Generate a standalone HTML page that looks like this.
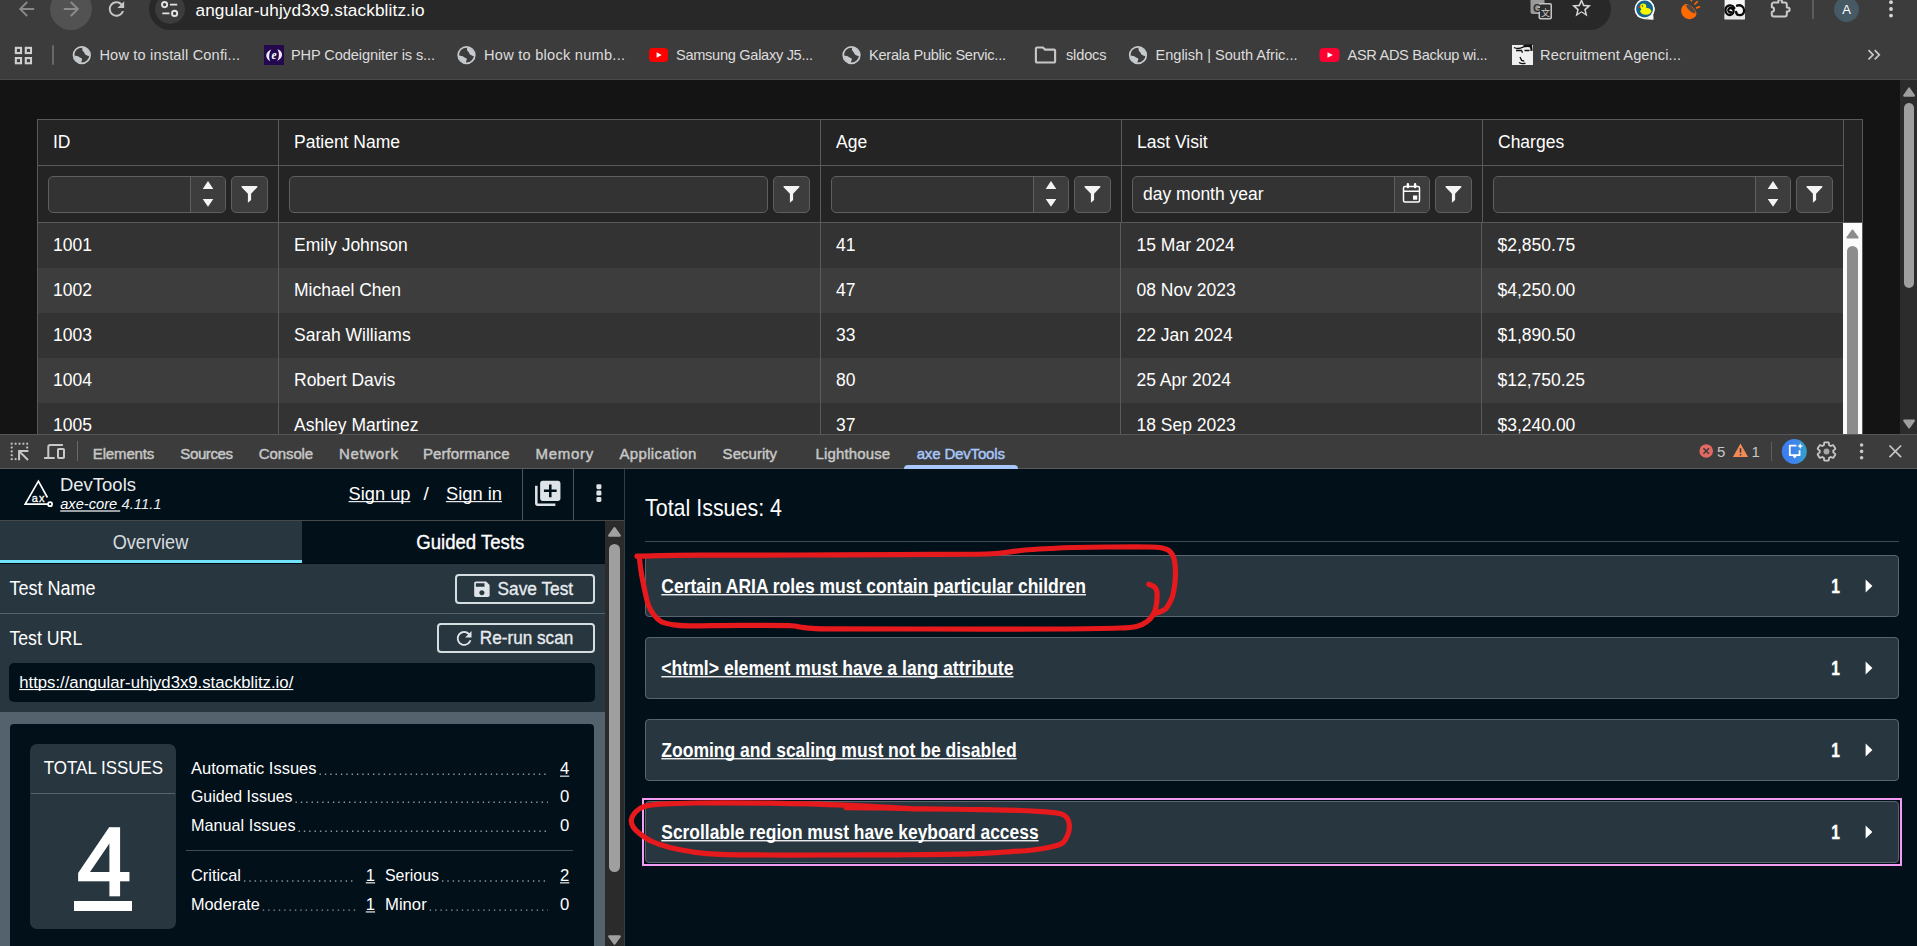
<!DOCTYPE html>
<html lang="en">
<head>
<meta charset="utf-8">
<title>axe DevTools - angular-uhjyd3x9.stackblitz.io</title>
<style>
html,body{margin:0;padding:0;background:#141414;overflow:hidden;}
#root{position:relative;width:1917px;height:946px;overflow:hidden;background:#141414;font-family:"Liberation Sans",sans-serif;}
.b{position:absolute;box-sizing:border-box;}
svg#ov{position:absolute;left:0;top:0;width:1917px;height:946px;font-family:"Liberation Sans",sans-serif;}
svg#ov text{white-space:pre;}
</style>
</head>
<body>
<div id="root">
<div class="b " style="left:0px;top:0px;width:1917px;height:80px;background:#3c3c3c;"></div>
<div class="b " style="left:0px;top:79px;width:1917px;height:1px;background:#4a4a4a;"></div>
<div class="b " style="left:149px;top:-12px;width:1462px;height:42px;background:#282828;border-radius:21px;"></div>
<div class="b " style="left:50px;top:-12px;width:42px;height:42px;background:#525252;border-radius:21px;"></div>
<div class="b " style="left:155px;top:-6px;width:30px;height:30px;background:#3c3c3c;border-radius:15px;"></div>
<div class="b " style="left:1812px;top:0px;width:2px;height:18.5px;background:#5c5c5c;"></div>
<div class="b " style="left:1834px;top:-3.5px;width:25px;height:25px;background:#455a64;border-radius:50%;"></div>
<div class="b " style="left:51.6px;top:45px;width:2px;height:20px;background:#686868;border-radius:1px;"></div>
<div class="b " style="left:264px;top:45px;width:20px;height:20px;background:#24084e;"></div>
<div class="b " style="left:1512px;top:45px;width:20.5px;height:20px;background:#efefef;"></div>
<div class="b " style="left:0px;top:80px;width:1900px;height:354px;background:#141414;"></div>
<div class="b " style="left:1900px;top:80px;width:17px;height:354px;background:#2c2c2c;"></div>
<div class="b " style="left:1904px;top:103px;width:10px;height:185px;background:#9f9f9f;border-radius:5px;"></div>
<div class="b " style="left:37px;top:119px;width:1826px;height:320px;background:#242424;border:1px solid #5a5a5a;"></div>
<div class="b " style="left:38px;top:223px;width:1805px;height:45px;background:#333333;"></div>
<div class="b " style="left:38px;top:268px;width:1805px;height:45px;background:#3d3d3d;"></div>
<div class="b " style="left:38px;top:313px;width:1805px;height:45px;background:#333333;"></div>
<div class="b " style="left:38px;top:358px;width:1805px;height:45px;background:#3d3d3d;"></div>
<div class="b " style="left:38px;top:403px;width:1805px;height:31px;background:#333333;"></div>
<div class="b " style="left:38px;top:165px;width:1806px;height:1px;background:#5a5a5a;"></div>
<div class="b " style="left:38px;top:222px;width:1824px;height:1px;background:#5a5a5a;"></div>
<div class="b " style="left:278px;top:120px;width:1px;height:102px;background:#5a5a5a;"></div>
<div class="b " style="left:820px;top:120px;width:1px;height:102px;background:#5a5a5a;"></div>
<div class="b " style="left:1121px;top:120px;width:1px;height:102px;background:#5a5a5a;"></div>
<div class="b " style="left:1482px;top:120px;width:1px;height:102px;background:#5a5a5a;"></div>
<div class="b " style="left:1843px;top:120px;width:1px;height:102px;background:#5a5a5a;"></div>
<div class="b " style="left:278px;top:223px;width:1px;height:211px;background:#5a5a5a;"></div>
<div class="b " style="left:820px;top:223px;width:1px;height:211px;background:#5a5a5a;"></div>
<div class="b " style="left:1120px;top:223px;width:1px;height:211px;background:#5a5a5a;"></div>
<div class="b " style="left:1481px;top:223px;width:1px;height:211px;background:#5a5a5a;"></div>
<div class="b " style="left:1843px;top:223px;width:19px;height:211px;background:#fbfbfb;"></div>
<div class="b " style="left:1847px;top:246px;width:11px;height:200px;background:#8c8c8c;border-radius:5.5px;"></div>
<div class="b " style="left:48px;top:176px;width:178px;height:37px;background:#333333;border:1px solid #5f5f5f;border-radius:5px;"></div>
<div class="b " style="left:190px;top:177px;width:35px;height:35px;background:#3d3d3d;border-left:1px solid #5f5f5f;border-radius:0 4px 4px 0;"></div>
<div class="b " style="left:231px;top:176px;width:37px;height:37px;background:#3d3d3d;border:1px solid #5f5f5f;border-radius:5px;"></div>
<div class="b " style="left:289px;top:176px;width:479px;height:37px;background:#333333;border:1px solid #5f5f5f;border-radius:5px;"></div>
<div class="b " style="left:773px;top:176px;width:37px;height:37px;background:#3d3d3d;border:1px solid #5f5f5f;border-radius:5px;"></div>
<div class="b " style="left:831px;top:176px;width:238px;height:37px;background:#333333;border:1px solid #5f5f5f;border-radius:5px;"></div>
<div class="b " style="left:1033px;top:177px;width:35px;height:35px;background:#3d3d3d;border-left:1px solid #5f5f5f;border-radius:0 4px 4px 0;"></div>
<div class="b " style="left:1074px;top:176px;width:37px;height:37px;background:#3d3d3d;border:1px solid #5f5f5f;border-radius:5px;"></div>
<div class="b " style="left:1132px;top:176px;width:298px;height:37px;background:#333333;border:1px solid #5f5f5f;border-radius:5px;"></div>
<div class="b " style="left:1394px;top:177px;width:35px;height:35px;background:#3d3d3d;border-left:1px solid #5f5f5f;border-radius:0 4px 4px 0;"></div>
<div class="b " style="left:1435px;top:176px;width:37px;height:37px;background:#3d3d3d;border:1px solid #5f5f5f;border-radius:5px;"></div>
<div class="b " style="left:1493px;top:176px;width:298px;height:37px;background:#333333;border:1px solid #5f5f5f;border-radius:5px;"></div>
<div class="b " style="left:1755px;top:177px;width:35px;height:35px;background:#3d3d3d;border-left:1px solid #5f5f5f;border-radius:0 4px 4px 0;"></div>
<div class="b " style="left:1796px;top:176px;width:37px;height:37px;background:#3d3d3d;border:1px solid #5f5f5f;border-radius:5px;"></div>
<div class="b " style="left:0px;top:434px;width:1917px;height:35px;background:#3c3c3c;border-top:1px solid #565656;border-bottom:1px solid #5a5a5a;"></div>
<div class="b " style="left:77px;top:441px;width:1px;height:20px;background:#686868;"></div>
<div class="b " style="left:904px;top:464.5px;width:113.5px;height:4px;background:#a8c7fa;border-radius:4px 4px 0 0;"></div>
<div class="b " style="left:1770.5px;top:441.5px;width:1.5px;height:19.5px;background:#5e5e5e;"></div>
<div class="b " style="left:0px;top:469px;width:1917px;height:477px;background:#02101a;"></div>
<div class="b " style="left:0px;top:520px;width:625px;height:1px;background:#484848;"></div>
<div class="b " style="left:522px;top:469px;width:1px;height:51px;background:#4b5660;"></div>
<div class="b " style="left:573px;top:469px;width:1px;height:51px;background:#4b5660;"></div>
<div class="b " style="left:605px;top:521px;width:19px;height:425px;background:#2b2b2b;"></div>
<div class="b " style="left:624px;top:469px;width:1px;height:477px;background:#303d47;"></div>
<div class="b " style="left:609px;top:544px;width:11px;height:328px;background:#9f9f9f;border-radius:5.5px;"></div>
<div class="b " style="left:0px;top:521px;width:302px;height:43px;background:#283640;"></div>
<div class="b " style="left:0px;top:560px;width:302px;height:3px;background:#70e2fa;"></div>
<div class="b " style="left:0px;top:563px;width:605px;height:1px;background:#010b14;"></div>
<div class="b " style="left:0px;top:564px;width:605px;height:148px;background:#283640;"></div>
<div class="b " style="left:0px;top:613px;width:605px;height:1px;background:#53626d;"></div>
<div class="b " style="left:455px;top:574px;width:140px;height:30px;border:2px solid #d4dde0;border-radius:4px;"></div>
<div class="b " style="left:437px;top:623px;width:158px;height:30px;border:2px solid #d4dde0;border-radius:4px;"></div>
<div class="b " style="left:9px;top:663px;width:586px;height:39px;background:#02101a;border-radius:5px;"></div>
<div class="b " style="left:0px;top:712px;width:605px;height:234px;background:#53626d;"></div>
<div class="b " style="left:10px;top:724px;width:584px;height:230px;background:#02101a;border-radius:4px;"></div>
<div class="b " style="left:30px;top:744px;width:146px;height:185px;background:#283640;border-radius:7px;"></div>
<div class="b " style="left:31px;top:793px;width:144px;height:1px;background:#53626d;"></div>
<div class="b " style="left:74px;top:900.7px;width:58px;height:10px;background:#ffffff;"></div>
<div class="b " style="left:186px;top:850px;width:387px;height:1px;background:#3e4b55;"></div>
<div class="b " style="left:645px;top:541px;width:1254px;height:1px;background:#3e4b55;"></div>
<div class="b " style="left:645px;top:555px;width:1254px;height:62px;background:#283640;border:1px solid #586570;border-radius:4px;"></div>
<div class="b " style="left:645px;top:637px;width:1254px;height:62px;background:#283640;border:1px solid #586570;border-radius:4px;"></div>
<div class="b " style="left:645px;top:719px;width:1254px;height:62px;background:#283640;border:1px solid #586570;border-radius:4px;"></div>
<div class="b " style="left:645px;top:801px;width:1254px;height:62px;background:#283640;border:1px solid #586570;border-radius:4px;"></div>
<div class="b " style="left:642px;top:798px;width:1260px;height:68px;border:2px solid #f29df2;"></div>
<svg id="ov" width="1917" height="946" viewBox="0 0 1917 946">
<path transform="translate(15.0,-2.5) scale(0.9583)" d="M20 11H7.83l5.59-5.59L12 4l-8 8 8 8 1.41-1.41L7.83 13H20v-2z" fill="#888" />
<path transform="translate(60.0,-2.5) scale(0.9583)" d="M12 4l-1.41 1.41L16.17 11H4v2h12.17l-5.58 5.59L12 20l8-8z" fill="#8c8c8c" />
<path transform="translate(105.0,-2.5) scale(0.9583)" d="M17.65 6.35C16.2 4.9 14.21 4 12 4c-4.42 0-7.99 3.58-7.99 8s3.57 8 7.99 8c3.73 0 6.84-2.55 7.73-6h-2.08c-.82 2.33-3.04 4-5.65 4-3.31 0-6-2.69-6-6s2.69-6 6-6c1.66 0 3.14.69 4.22 1.78L13 11h7V4l-2.35 2.35z" fill="#c7c7c7" />
<g stroke="#e3e3e3" stroke-width="1.9" fill="none"><circle cx="164.6" cy="4.6" r="2.6"/><path d="M170 4.6h7.2M162.3 13.4h7.2"/><circle cx="174.6" cy="13.4" r="2.6"/></g>
<text x="195.5" y="15.8" font-size="17.2" fill="#ffffff" textLength="229" lengthAdjust="spacing">angular-uhjyd3x9.stackblitz.io</text>
<g><rect x="1530.5" y="-2" width="14" height="16" rx="2" fill="#9a9a9a"/><rect x="1538.5" y="3" width="13.5" height="16.5" rx="2" fill="#c4c4c4"/><rect x="1540" y="4.5" width="10.5" height="13.5" rx="1" fill="#2e2e2e"/></g>
<text x="1533" y="11.5" font-size="11" fill="#2e2e2e" font-weight="bold">G</text>
<text x="1541" y="15.5" font-size="9" fill="#d0d0d0" font-family="Liberation Sans, Noto Sans CJK SC, sans-serif">文</text>
<path transform="translate(1570.0,-3.5) scale(0.9583)" d="M22 9.24l-7.19-.62L12 2 9.19 8.63 2 9.24l5.46 4.73L5.82 21 12 16.77 18.18 21l-1.63-7.03L22 9.24zM12 15.4l-3.76 2.27 1-4.28-3.32-2.88 4.38-.38L12 6.1l1.71 4.04 4.38.38-3.32 2.88 1 4.28L12 15.4z" fill="#d6d6d6" />
<g><path d="M1644.6 -1a10.1 10.1 0 1 1 0 20.200l8.600 .6-2.400-3.400" fill="#fff"/><circle cx="1644.6" cy="9.1" r="10.1" fill="#fff"/><path d="M1650 16.500l3.600 3.400-.4-6z" fill="#fff"/><circle cx="1644.6" cy="9.1" r="8.500" fill="#15638f"/><circle cx="1643.2" cy="6.600" r="3.100" fill="#f7f700"/><ellipse cx="1645.8" cy="11.300" rx="5.500" ry="3.500" fill="#f7f700"/><circle cx="1639.3" cy="7.300" r="1" fill="#e8261c"/><circle cx="1642.4" cy="6.100" r=".75" fill="#333"/></g>
<g><path d="M1684.6 4.200a8.200 8.200 0 0 0 -1.800 11.600a8.200 8.200 0 0 0 11.400 1.800a12 12 0 0 0 2.200-2.600z" fill="#ff6a00"/><ellipse cx="1690.6" cy="9.600" rx="3" ry="7.500" transform="rotate(-48 1690.6 9.600)" fill="#ff6a00"/><ellipse cx="1691.1" cy="9" rx="2.100" ry="5.900" transform="rotate(-48 1690.9 9.300)" fill="#4a4a4a"/><path d="M1691.3 .6l1.300-2.800M1695 4l2.100-2.300M1696.7 7.900l2.700-1.100" stroke="#ff6a00" stroke-width="1.700" stroke-linecap="round" fill="none"/></g>
<g><rect x="1724.6" y="-2" width="20.2" height="21.3" fill="#f5f5f5"/><rect x="1724.6" y="14.600" width="20.2" height="4.700" fill="#e6e6e6"/><g fill="none" stroke="#0a0a0a" stroke-width="2.100" stroke-linecap="round" transform="translate(1734.7 9.700) scale(1.1 1.12) translate(-1734.7 -9.700)"><path d="M1731.3 11.900a1.900 1.900 0 1 1 -.2-3.700c1.700 .1 2.700 1.500 2.600 3.200-.2 1.900-1.900 3.100-3.700 3-2.200-.2-3.900-2.200-3.700-4.700 .2-2.400 2.200-4.100 4.600-3.900 1.600 .1 2.800 .9 3.500 2.300"/><path d="M1736.8 6.100c3.400-1.100 6.500 .9 6.500 4.200 0 2.500-1.800 4.300-4 4.300-2 0-3.300-1.300-3.300-3"/></g></g>
<path d="M1778.400 2.500H1773.800a2 2 0 0 0 -2 2V7.300c3 0 3 4.600 0 4.600V14.400a2 2 0 0 0 2 2H1784.800a2 2 0 0 0 2-2V11.500h.9a1.950 1.950 0 0 0 0-3.900h-.9V4.500a2 2 0 0 0 -2-2H1781.900v-1.200a1.750 1.750 0 0 0 -3.500 0Z" fill="none" stroke="#c9c9c9" stroke-width="2" stroke-linejoin="round"/>
<text x="1846.6" y="13.5" font-size="13" fill="#ffffff" text-anchor="middle">A</text>
<g fill="#d6d6d6"><circle cx="1891" cy="2.2" r="1.9"/><circle cx="1891" cy="9" r="1.9"/><circle cx="1891" cy="15.6" r="1.9"/></g>
<g fill="none" stroke="#cfcfcf" stroke-width="2.100"><rect x="15.850" y="47.850" width="5.200" height="5.200"/><rect x="25.800" y="47.850" width="5.200" height="5.200"/><rect x="15.850" y="58.050" width="5.200" height="5.200"/><rect x="25.800" y="58.050" width="5.200" height="5.200"/></g>
<g transform="translate(81.8,55.1)"><circle r="8.300" fill="none" stroke="#c7cacd" stroke-width="1.700"/><path d="M.8 -7.800A7.800 7.800 0 0 1 7.800 .3C6.200 1.500 4.800 .2 3.600 -.5 2.400 -1.200 3.100 -2.600 1.800 -3.400 .5 -4.200 .1 -6 .8 -7.800Z" fill="#c7cacd"/><path d="M-7.800 .2A7.800 7.800 0 0 0 -.3 7.800C-.9 6.100 .5 5.100 .3 3.800 .1 2.500 -1.600 2.800 -2.700 1.800 -3.800 .8 -5.800 1 -7.800 .2Z" fill="#c7cacd"/></g>
<text x="99.4" y="60" font-size="14.6" fill="#dddddd" textLength="140.6" lengthAdjust="spacing">How to install Confi...</text>
<path d="M271.300 49.400C265.600 51.300 264 57.800 270.400 61.300 268.600 58 268.800 53 271.300 49.400ZM277.300 49.200C283.200 50.800 284.200 57.800 277.100 60.900 279.400 57.500 279.600 52.500 277.300 49.200Z" fill="#efeaf8"/>
<text x="274.1" y="58.6" font-size="11.5" fill="#ffffff" font-weight="bold" font-style="italic" text-anchor="middle" font-family="Liberation Serif, serif">e</text>
<text x="291" y="60" font-size="14.6" fill="#dddddd" textLength="144" lengthAdjust="spacing">PHP Codeigniter is s...</text>
<g transform="translate(466.5,55.1)"><circle r="8.300" fill="none" stroke="#c7cacd" stroke-width="1.700"/><path d="M.8 -7.800A7.800 7.800 0 0 1 7.800 .3C6.200 1.500 4.800 .2 3.600 -.5 2.400 -1.200 3.100 -2.600 1.800 -3.400 .5 -4.200 .1 -6 .8 -7.800Z" fill="#c7cacd"/><path d="M-7.800 .2A7.800 7.800 0 0 0 -.3 7.800C-.9 6.100 .5 5.100 .3 3.800 .1 2.500 -1.600 2.800 -2.700 1.800 -3.800 .8 -5.800 1 -7.800 .2Z" fill="#c7cacd"/></g>
<text x="484" y="60" font-size="14.6" fill="#dddddd" textLength="141" lengthAdjust="spacing">How to block numb...</text>
<g><rect x="649" y="48" width="19" height="14" rx="4" fill="#ff0000"/><path d="M656.6 52.2l5.130000000000001 2.8000000000000003l-5.130000000000001 2.8000000000000003z" fill="#fff"/></g>
<text x="676" y="60" font-size="14.6" fill="#dddddd" textLength="137" lengthAdjust="spacing">Samsung Galaxy J5...</text>
<g transform="translate(851.5,55.1)"><circle r="8.300" fill="none" stroke="#c7cacd" stroke-width="1.700"/><path d="M.8 -7.800A7.800 7.800 0 0 1 7.800 .3C6.200 1.500 4.800 .2 3.600 -.5 2.400 -1.200 3.100 -2.600 1.800 -3.400 .5 -4.200 .1 -6 .8 -7.800Z" fill="#c7cacd"/><path d="M-7.800 .2A7.800 7.800 0 0 0 -.3 7.800C-.9 6.100 .5 5.100 .3 3.800 .1 2.500 -1.600 2.800 -2.700 1.800 -3.800 .8 -5.800 1 -7.800 .2Z" fill="#c7cacd"/></g>
<text x="869" y="60" font-size="14.6" fill="#dddddd" textLength="137" lengthAdjust="spacing">Kerala Public Servic...</text>
<path transform="translate(1032.7,42.2) scale(1.0667)" d="M9.17 6l2 2H20v10H4V6h5.17M10 4H4c-1.1 0-1.99.9-1.99 2L2 18c0 1.1.9 2 2 2h16c1.1 0 2-.9 2-2V8c0-1.1-.9-2-2-2h-8l-2-2z" fill="#c7c7c7" />
<text x="1066" y="60" font-size="14.6" fill="#dddddd" textLength="40.5" lengthAdjust="spacing">sldocs</text>
<g transform="translate(1138,55.1)"><circle r="8.300" fill="none" stroke="#c7cacd" stroke-width="1.700"/><path d="M.8 -7.800A7.800 7.800 0 0 1 7.800 .3C6.200 1.500 4.800 .2 3.600 -.5 2.400 -1.200 3.100 -2.600 1.800 -3.400 .5 -4.200 .1 -6 .8 -7.800Z" fill="#c7cacd"/><path d="M-7.800 .2A7.800 7.800 0 0 0 -.3 7.800C-.9 6.100 .5 5.100 .3 3.800 .1 2.500 -1.600 2.800 -2.700 1.800 -3.800 .8 -5.800 1 -7.800 .2Z" fill="#c7cacd"/></g>
<text x="1155.5" y="60" font-size="14.6" fill="#dddddd" textLength="142.0" lengthAdjust="spacing">English | South Afric...</text>
<g><rect x="1319.5" y="48" width="20" height="14" rx="4" fill="#ff0033"/><path d="M1327.5 52.2l5.4 2.8000000000000003l-5.4 2.8000000000000003z" fill="#fff"/></g>
<text x="1347.5" y="60" font-size="14.6" fill="#dddddd" textLength="140.0" lengthAdjust="spacing">ASR ADS Backup wi...</text>
<g fill="none" stroke="#111" stroke-width="1.3"><path d="M1514 47.5c3 1.5 6 1.2 9-.4 3-1 6-1 8.5.3M1516 50.5h5.5l1 2.2M1524.5 50.5h5M1520 57l1.6 3.4 2.6.8M1519 62.5c2 1.2 4.5 1.4 6.5.6"/><path d="M1523.5 46l7.5-.6.6 5.4" stroke-width="2.2"/></g>
<text x="1540" y="60" font-size="14.6" fill="#dddddd" textLength="141" lengthAdjust="spacing">Recruitment Agenci...</text>
<path d="M1868.5 50.2l4.6 4.6-4.6 4.6M1874.7 50.2l4.6 4.6-4.6 4.6" fill="none" stroke="#c7c7c7" stroke-width="1.7"/>
<path d="M1904.300 95.700l4.800-7.200 4.800 7.200z" fill="#9f9f9f" stroke="#9f9f9f" stroke-width="2.200" stroke-linejoin="round"/>
<path d="M1904.300 420.700l4.800 6.600 4.800-6.600z" fill="#9f9f9f" stroke="#9f9f9f" stroke-width="2.200" stroke-linejoin="round"/>
<path d="M1847.400 237.600l5.100-7.100 5.100 7.100z" fill="#8c8c8c" stroke="#8c8c8c" stroke-width="2" stroke-linejoin="round"/>
<text x="53" y="148" font-size="17.5" fill="#ffffff">ID</text>
<text x="294" y="148" font-size="17.5" fill="#ffffff">Patient Name</text>
<text x="836" y="148" font-size="17.5" fill="#ffffff">Age</text>
<text x="1137" y="148" font-size="17.5" fill="#ffffff">Last Visit</text>
<text x="1498" y="148" font-size="17.5" fill="#ffffff">Charges</text>
<path d="M202.70000000000002 189l5.300-7.900 5.300 7.900zM202.70000000000002 199l5.300 7.700 5.300-7.700z" fill="#f4f4f4"/>
<path d="M241.6 186.100H257.3V187.200L251.1 193.800V200.100L247.9 202.800V193.800L241.6 187.200Z" fill="#f4f4f4"/>
<path d="M783.6 186.100H799.3V187.200L793.1 193.800V200.100L789.9 202.800V193.800L783.6 187.200Z" fill="#f4f4f4"/>
<path d="M1045.7 189l5.300-7.900 5.300 7.900zM1045.7 199l5.300 7.700 5.300-7.700z" fill="#f4f4f4"/>
<path d="M1084.6 186.100H1100.3V187.200L1094.1 193.800V200.100L1090.9 202.800V193.800L1084.6 187.200Z" fill="#f4f4f4"/>
<g fill="none" stroke="#fff" stroke-width="1.5"><rect x="1403.5" y="186.5" width="16" height="15.5" rx="1.5"/><path d="M1403.5 191.2h16M1403.5 191.200h16"/><path d="M1407.9 184.300v2.800M1415.1 184.300v2.800" stroke-width="2.400" stroke-linecap="round"/></g><rect x="1413.0" y="195.5" width="4.2" height="4.2" fill="#fff"/>
<path d="M1445.6 186.100H1461.3V187.200L1455.1 193.800V200.100L1451.9 202.800V193.800L1445.6 187.200Z" fill="#f4f4f4"/>
<path d="M1767.7 189l5.300-7.900 5.300 7.900zM1767.7 199l5.300 7.700 5.300-7.700z" fill="#f4f4f4"/>
<path d="M1806.6 186.100H1822.3V187.200L1816.1 193.800V200.100L1812.9 202.800V193.800L1806.6 187.200Z" fill="#f4f4f4"/>
<text x="1143" y="200" font-size="17.5" fill="#ffffff">day month year</text>
<clipPath id="pgclip"><rect x="0" y="80" width="1900" height="354"/></clipPath><g clip-path="url(#pgclip)">
<text x="53" y="251" font-size="17.5" fill="#ffffff">1001</text>
<text x="294" y="251" font-size="17.5" fill="#ffffff">Emily Johnson</text>
<text x="836" y="251" font-size="17.5" fill="#ffffff">41</text>
<text x="1136.5" y="251" font-size="17.5" fill="#ffffff">15 Mar 2024</text>
<text x="1497.5" y="251" font-size="17.5" fill="#ffffff">$2,850.75</text>
<text x="53" y="296" font-size="17.5" fill="#ffffff">1002</text>
<text x="294" y="296" font-size="17.5" fill="#ffffff">Michael Chen</text>
<text x="836" y="296" font-size="17.5" fill="#ffffff">47</text>
<text x="1136.5" y="296" font-size="17.5" fill="#ffffff">08 Nov 2023</text>
<text x="1497.5" y="296" font-size="17.5" fill="#ffffff">$4,250.00</text>
<text x="53" y="341" font-size="17.5" fill="#ffffff">1003</text>
<text x="294" y="341" font-size="17.5" fill="#ffffff">Sarah Williams</text>
<text x="836" y="341" font-size="17.5" fill="#ffffff">33</text>
<text x="1136.5" y="341" font-size="17.5" fill="#ffffff">22 Jan 2024</text>
<text x="1497.5" y="341" font-size="17.5" fill="#ffffff">$1,890.50</text>
<text x="53" y="386" font-size="17.5" fill="#ffffff">1004</text>
<text x="294" y="386" font-size="17.5" fill="#ffffff">Robert Davis</text>
<text x="836" y="386" font-size="17.5" fill="#ffffff">80</text>
<text x="1136.5" y="386" font-size="17.5" fill="#ffffff">25 Apr 2024</text>
<text x="1497.5" y="386" font-size="17.5" fill="#ffffff">$12,750.25</text>
<text x="53" y="431" font-size="17.5" fill="#ffffff">1005</text>
<text x="294" y="431" font-size="17.5" fill="#ffffff">Ashley Martinez</text>
<text x="836" y="431" font-size="17.5" fill="#ffffff">37</text>
<text x="1136.5" y="431" font-size="17.5" fill="#ffffff">18 Sep 2023</text>
<text x="1497.5" y="431" font-size="17.5" fill="#ffffff">$3,240.00</text>
</g>
<g fill="#c9c9c9"><rect x="10.75" y="442.75" width="1.9" height="1.9"/><rect x="14.65" y="442.75" width="1.9" height="1.9"/><rect x="18.55" y="442.75" width="1.9" height="1.9"/><rect x="22.45" y="442.75" width="1.9" height="1.9"/><rect x="26.25" y="442.75" width="1.9" height="1.9"/><rect x="26.25" y="446.55" width="1.9" height="1.9"/><rect x="10.75" y="446.55" width="1.9" height="1.9"/><rect x="10.75" y="450.45" width="1.9" height="1.9"/><rect x="10.75" y="454.25" width="1.9" height="1.9"/><rect x="10.75" y="458.15" width="1.9" height="1.9"/><rect x="14.65" y="458.15" width="1.9" height="1.9"/></g>
<path d="M28.400 451.100H19.100V460.200M19.600 451.600L28 460" fill="none" stroke="#c9c9c9" stroke-width="2"/>
<g fill="none" stroke="#c9c9c9" stroke-width="2"><path d="M62.900 444.900H50.300a2 2 0 0 0 -2 2V457"/><path d="M44.100 458H54.700"/><rect x="58" y="449" width="6" height="9" rx=".8"/></g>
<text x="92.8" y="458.5" font-size="15" fill="#c7c7c7" textLength="61.5" lengthAdjust="spacing" stroke="#c7c7c7" stroke-width="0.45">Elements</text>
<text x="180.3" y="458.5" font-size="15" fill="#c7c7c7" textLength="52.7" lengthAdjust="spacing" stroke="#c7c7c7" stroke-width="0.45">Sources</text>
<text x="258.8" y="458.5" font-size="15" fill="#c7c7c7" textLength="54.4" lengthAdjust="spacing" stroke="#c7c7c7" stroke-width="0.45">Console</text>
<text x="338.9" y="458.5" font-size="15" fill="#c7c7c7" textLength="59.1" lengthAdjust="spacing" stroke="#c7c7c7" stroke-width="0.45">Network</text>
<text x="423" y="458.5" font-size="15" fill="#c7c7c7" textLength="86.5" lengthAdjust="spacing" stroke="#c7c7c7" stroke-width="0.45">Performance</text>
<text x="535.6" y="458.5" font-size="15" fill="#c7c7c7" textLength="57.7" lengthAdjust="spacing" stroke="#c7c7c7" stroke-width="0.45">Memory</text>
<text x="619.4" y="458.5" font-size="15" fill="#c7c7c7" textLength="77.0" lengthAdjust="spacing" stroke="#c7c7c7" stroke-width="0.45">Application</text>
<text x="722.6" y="458.5" font-size="15" fill="#c7c7c7" textLength="54.4" lengthAdjust="spacing" stroke="#c7c7c7" stroke-width="0.45">Security</text>
<text x="815.5" y="458.5" font-size="15" fill="#c7c7c7" textLength="74.7" lengthAdjust="spacing" stroke="#c7c7c7" stroke-width="0.45">Lighthouse</text>
<text x="916.7" y="458.5" font-size="15" fill="#a8c7fa" textLength="88.2" lengthAdjust="spacing" stroke="#a8c7fa" stroke-width="0.45">axe DevTools</text>
<g><circle cx="1706.2" cy="451" r="6.8" fill="#e46962"/><path d="M1703.4 448.2l5.6 5.6M1709 448.2l-5.6 5.6" stroke="#3c3c3c" stroke-width="1.6"/></g>
<text x="1717" y="456.5" font-size="15" fill="#c7c7c7">5</text>
<g><path d="M1740.5 443.6l7.6 13.4h-15.2z" fill="#f28b55"/><path d="M1740.5 448.2v4.6M1740.5 454v1.6" stroke="#3c3c3c" stroke-width="1.6"/></g>
<text x="1751.5" y="456.5" font-size="15" fill="#c7c7c7">1</text>
<g><defs><linearGradient id="aig" x1="0" y1="0" x2="1" y2="0"><stop offset="0" stop-color="#3b7cf2"/><stop offset=".55" stop-color="#3f86ea"/><stop offset="1" stop-color="#2fa3c9"/></linearGradient></defs><circle cx="1794.3" cy="451.5" r="12.5" fill="url(#aig)"/><path d="M1796.300 445.600h-6.500v9.600h9.800v-5" fill="none" stroke="#fff" stroke-width="1.800" stroke-linejoin="round"/><path d="M1792.500 455.800h4.400l-2.200 2.600z" fill="#fff"/><path d="M1800.2 443.2l.9 2 2 .9-2 .9-.9 2-.9-2-2-.9 2-.9z" fill="#fff"/></g>
<g transform="translate(1815.1,440.1) scale(0.95)" fill="none" stroke="#c7c7c7" stroke-width="1.9"><path d="M19.14 12.94c.04-.3.06-.61.06-.94 0-.32-.02-.64-.07-.94l2.03-1.58c.18-.14.23-.41.12-.61l-1.92-3.32c-.12-.22-.37-.29-.59-.22l-2.39.96c-.5-.38-1.03-.7-1.62-.94l-.36-2.54c-.04-.24-.24-.41-.48-.41h-3.84c-.24 0-.43.17-.47.41l-.36 2.54c-.59.24-1.13.57-1.62.94l-2.39-.96c-.22-.08-.47 0-.59.22L2.74 8.87c-.12.21-.08.47.12.61l2.03 1.58c-.05.3-.09.63-.09.94s.02.64.07.94l-2.03 1.58c-.18.14-.23.41-.12.61l1.92 3.32c.12.22.37.29.59.22l2.39-.96c.5.38 1.03.7 1.62.94l.36 2.54c.05.24.24.41.48.41h3.84c.24 0 .44-.17.47-.41l.36-2.54c.59-.24 1.13-.56 1.62-.94l2.39.96c.22.08.47 0 .59-.22l1.92-3.32c.12-.22.07-.47-.12-.61l-2.01-1.58z"/><circle cx="12" cy="12" r="3.100" fill="#a6a6a6" stroke="none"/></g>
<g fill="#c7c7c7"><circle cx="1861.6" cy="445" r="1.8"/><circle cx="1861.6" cy="451.4" r="1.8"/><circle cx="1861.6" cy="457.8" r="1.8"/></g>
<path d="M1889.5 445.5l11.6 11.6M1901.1 445.5l-11.6 11.6" stroke="#c7c7c7" stroke-width="1.7" fill="none"/>
<g fill="none" stroke="#fff" stroke-width="1.7" stroke-linejoin="miter"><path d="M47.4 497.5L38.4 481.2 25.2 504.2H48"/><circle cx="50.1" cy="504.2" r="2"/></g>
<text x="31.7" y="501.6" font-size="11" fill="#ffffff" textLength="12.8" lengthAdjust="spacing" stroke="#fff" stroke-width="0.3">ax</text>
<text x="60" y="490.5" font-size="18.6" fill="#e9ecee" textLength="76" lengthAdjust="spacingAndGlyphs">DevTools</text>
<text x="60.2" y="508.8" font-size="15" fill="#ffffff" textLength="57" lengthAdjust="spacingAndGlyphs" font-style="italic">axe-core</text>
<rect x="60.2" y="510.40000000000003" width="60" height="1.2" fill="#ffffff"/>
<text x="121.5" y="508.8" font-size="15" fill="#e9ecee" textLength="40" lengthAdjust="spacingAndGlyphs" font-style="italic">4.11.1</text>
<text x="348.6" y="499.5" font-size="19.2" fill="#ffffff" textLength="61.8" lengthAdjust="spacingAndGlyphs">Sign up</text>
<rect x="348.6" y="501.1" width="61.8" height="1.1" fill="#ffffff"/>
<text x="423.4" y="499.5" font-size="19.2" fill="#ffffff">/</text>
<text x="445.9" y="499.5" font-size="19.2" fill="#ffffff" textLength="56.1" lengthAdjust="spacingAndGlyphs">Sign in</text>
<rect x="445.9" y="501.1" width="56.1" height="1.1" fill="#ffffff"/>
<path transform="translate(532.5,478.1) scale(1.2708)" d="M4 6H2v14c0 1.1.9 2 2 2h14v-2H4V6zm16-4H8c-1.1 0-2 .9-2 2v12c0 1.1.9 2 2 2h12c1.1 0 2-.9 2-2V4c0-1.1-.9-2-2-2zm-1 9h-4v4h-2v-4H9V9h4V5h2v4h4v2z" fill="#dde3e6" />
<g fill="#dde3e6"><rect x="596.4" y="484.2" width="5" height="5" rx="1.4"/><rect x="596.4" y="490.6" width="5" height="5" rx="1.4"/><rect x="596.4" y="497" width="5" height="5" rx="1.4"/></g>
<path d="M609.200 535.700l5.300-7.500 5.300 7.500z" fill="#a0a0a0" stroke="#a0a0a0" stroke-width="2.200" stroke-linejoin="round"/>
<path d="M609.200 936.300l5.300 7.300 5.300-7.300z" fill="#a0a0a0" stroke="#a0a0a0" stroke-width="2.200" stroke-linejoin="round"/>
<text x="112.7" y="549" font-size="19.3" fill="#d7dcdf" textLength="75.6" lengthAdjust="spacingAndGlyphs">Overview</text>
<text x="416.2" y="549" font-size="19.3" fill="#ffffff" textLength="108.2" lengthAdjust="spacingAndGlyphs" stroke="#fff" stroke-width="0.35">Guided Tests</text>
<text x="9.4" y="595" font-size="19.4" fill="#ffffff" textLength="86.1" lengthAdjust="spacingAndGlyphs">Test Name</text>
<text x="9.4" y="644.8" font-size="19.4" fill="#ffffff" textLength="72.9" lengthAdjust="spacingAndGlyphs">Test URL</text>
<path transform="translate(471.59999999999997,579.0) scale(0.8583)" d="M17 3H5c-1.11 0-2 .9-2 2v14c0 1.1.89 2 2 2h14c1.1 0 2-.9 2-2V7l-4-4zm-5 16c-1.66 0-3-1.34-3-3s1.34-3 3-3 3 1.34 3 3-1.34 3-3 3zm3-10H5V5h10v4z" fill="#dde3e6" />
<text x="497.6" y="595" font-size="18.5" fill="#e6ebee" textLength="75.5" lengthAdjust="spacingAndGlyphs" stroke="#e6ebee" stroke-width="0.35">Save Test</text>
<path transform="translate(453.2,627.4) scale(0.9167)" d="M17.65 6.35C16.2 4.9 14.21 4 12 4c-4.42 0-7.99 3.58-7.99 8s3.57 8 7.99 8c3.73 0 6.84-2.55 7.73-6h-2.08c-.82 2.33-3.04 4-5.65 4-3.31 0-6-2.69-6-6s2.69-6 6-6c1.66 0 3.14.69 4.22 1.78L13 11h7V4l-2.35 2.35z" fill="#dde3e6" />
<text x="479.8" y="644.3" font-size="18.5" fill="#e6ebee" textLength="93.5" lengthAdjust="spacingAndGlyphs" stroke="#e6ebee" stroke-width="0.35">Re-run scan</text>
<text x="19.2" y="688" font-size="17.2" fill="#ffffff" textLength="274.1" lengthAdjust="spacingAndGlyphs">https://angular-uhjyd3x9.stackblitz.io/</text>
<rect x="19.2" y="689.0" width="274.1" height="1.1" fill="#ffffff"/>
<text x="43.7" y="773.6" font-size="18.6" fill="#ffffff" textLength="119.5" lengthAdjust="spacingAndGlyphs">TOTAL ISSUES</text>
<text x="77.2" y="895" font-size="96.5" fill="#ffffff" stroke="#fff" stroke-width="2.6" stroke-linejoin="miter">4</text>
<text x="191" y="774" font-size="17" fill="#ffffff" textLength="125.5" lengthAdjust="spacingAndGlyphs">Automatic Issues</text>
<path d="M319.5 774.3H548" stroke="#8d979e" stroke-width="1.4" stroke-dasharray="1.4 3.95" fill="none"/>
<text x="560" y="774" font-size="17" fill="#ffffff" textLength="9.3" lengthAdjust="spacingAndGlyphs">4</text>
<rect x="560" y="775.6" width="9.3" height="1.1" fill="#ffffff"/>
<text x="191" y="802" font-size="17" fill="#ffffff" textLength="101.5" lengthAdjust="spacingAndGlyphs">Guided Issues</text>
<path d="M295.5 802.3H548" stroke="#8d979e" stroke-width="1.4" stroke-dasharray="1.4 3.95" fill="none"/>
<text x="560" y="802" font-size="17" fill="#ffffff" textLength="9.3" lengthAdjust="spacingAndGlyphs">0</text>
<text x="191" y="831" font-size="17" fill="#ffffff" textLength="104.5" lengthAdjust="spacingAndGlyphs">Manual Issues</text>
<path d="M298.5 831.3H548" stroke="#8d979e" stroke-width="1.4" stroke-dasharray="1.4 3.95" fill="none"/>
<text x="560" y="831" font-size="17" fill="#ffffff" textLength="9.3" lengthAdjust="spacingAndGlyphs">0</text>
<text x="191" y="880.7" font-size="17" fill="#ffffff" textLength="50" lengthAdjust="spacingAndGlyphs">Critical</text>
<path d="M244 881.0H356" stroke="#8d979e" stroke-width="1.4" stroke-dasharray="1.4 3.95" fill="none"/>
<text x="365.8" y="880.7" font-size="17" fill="#ffffff" textLength="9.3" lengthAdjust="spacingAndGlyphs">1</text>
<rect x="365.8" y="882.3000000000001" width="9.3" height="1.1" fill="#ffffff"/>
<text x="385" y="880.7" font-size="17" fill="#ffffff" textLength="54" lengthAdjust="spacingAndGlyphs">Serious</text>
<path d="M442 881.0H548" stroke="#8d979e" stroke-width="1.4" stroke-dasharray="1.4 3.95" fill="none"/>
<text x="560" y="880.7" font-size="17" fill="#ffffff" textLength="9.3" lengthAdjust="spacingAndGlyphs">2</text>
<rect x="560" y="882.3000000000001" width="9.3" height="1.1" fill="#ffffff"/>
<text x="191" y="909.8" font-size="17" fill="#ffffff" textLength="68.8" lengthAdjust="spacingAndGlyphs">Moderate</text>
<path d="M262.8 910.0999999999999H356" stroke="#8d979e" stroke-width="1.4" stroke-dasharray="1.4 3.95" fill="none"/>
<text x="365.8" y="909.8" font-size="17" fill="#ffffff" textLength="9.3" lengthAdjust="spacingAndGlyphs">1</text>
<rect x="365.8" y="911.4" width="9.3" height="1.1" fill="#ffffff"/>
<text x="385" y="909.8" font-size="17" fill="#ffffff" textLength="41.7" lengthAdjust="spacingAndGlyphs">Minor</text>
<path d="M429.7 910.0999999999999H548" stroke="#8d979e" stroke-width="1.4" stroke-dasharray="1.4 3.95" fill="none"/>
<text x="560" y="909.8" font-size="17" fill="#ffffff" textLength="9.3" lengthAdjust="spacingAndGlyphs">0</text>
<text x="645" y="516" font-size="24" fill="#ffffff" textLength="137" lengthAdjust="spacingAndGlyphs">Total Issues: 4</text>
<text x="661.3" y="593" font-size="20" fill="#ffffff" textLength="424.7" lengthAdjust="spacingAndGlyphs" font-weight="bold">Certain ARIA roles must contain particular children</text>
<rect x="661.3" y="594.1" width="424.7" height="1.3" fill="#ffffff"/>
<text x="1831.2" y="593" font-size="20" fill="#ffffff" textLength="8.6" lengthAdjust="spacingAndGlyphs" font-weight="bold" stroke="#fff" stroke-width="0.4">1</text>
<path d="M1865.6 579.5l6.8 6.5-6.8 6.5z" fill="#fff"/>
<text x="661.3" y="675" font-size="20" fill="#ffffff" textLength="352.2" lengthAdjust="spacingAndGlyphs" font-weight="bold">&lt;html&gt; element must have a lang attribute</text>
<rect x="661.3" y="676.1" width="352.2" height="1.3" fill="#ffffff"/>
<text x="1831.2" y="675" font-size="20" fill="#ffffff" textLength="8.6" lengthAdjust="spacingAndGlyphs" font-weight="bold" stroke="#fff" stroke-width="0.4">1</text>
<path d="M1865.6 661.5l6.8 6.5-6.8 6.5z" fill="#fff"/>
<text x="661.3" y="757" font-size="20" fill="#ffffff" textLength="355.3" lengthAdjust="spacingAndGlyphs" font-weight="bold">Zooming and scaling must not be disabled</text>
<rect x="661.3" y="758.1" width="355.3" height="1.3" fill="#ffffff"/>
<text x="1831.2" y="757" font-size="20" fill="#ffffff" textLength="8.6" lengthAdjust="spacingAndGlyphs" font-weight="bold" stroke="#fff" stroke-width="0.4">1</text>
<path d="M1865.6 743.5l6.8 6.5-6.8 6.5z" fill="#fff"/>
<text x="661.3" y="839" font-size="20" fill="#ffffff" textLength="377.3" lengthAdjust="spacingAndGlyphs" font-weight="bold">Scrollable region must have keyboard access</text>
<rect x="661.3" y="840.1" width="377.3" height="1.3" fill="#ffffff"/>
<text x="1831.2" y="839" font-size="20" fill="#ffffff" textLength="8.6" lengthAdjust="spacingAndGlyphs" font-weight="bold" stroke="#fff" stroke-width="0.4">1</text>
<path d="M1865.6 825.5l6.8 6.5-6.8 6.5z" fill="#fff"/>
<g fill="none" stroke="#e6191c" stroke-width="5.2" stroke-linecap="round" stroke-linejoin="round"><path d="M1148.8 584.3C1149.7 584.7 1152.7 585.4 1154.0 586.5C1155.3 587.6 1156.3 589.1 1156.8 591.0C1157.3 592.9 1157.1 595.3 1157.0 598.0C1156.9 600.7 1156.7 604.2 1156.0 607.0C1155.3 609.8 1154.5 612.6 1153.0 615.0C1151.5 617.4 1149.5 619.7 1147.0 621.5C1144.5 623.3 1142.5 624.9 1138.0 626.0C1133.5 627.1 1133.7 627.5 1120.0 628.0C1106.3 628.5 1088.5 628.8 1056.0 629.0C1023.5 629.2 962.7 629.0 925.0 629.0C887.3 629.0 848.7 628.9 830.0 628.8C811.3 628.7 817.8 628.7 812.8 628.4C807.8 628.1 804.0 627.5 800.0 627.0C796.0 626.5 799.0 625.9 789.0 625.6C779.0 625.3 756.9 625.4 740.0 625.4C723.1 625.4 698.9 625.9 687.6 625.8C676.3 625.6 676.4 625.2 672.0 624.5C667.6 623.8 664.0 623.1 661.0 621.5C658.0 619.9 656.1 617.7 654.0 615.0C651.9 612.3 649.9 608.9 648.5 605.4C647.1 601.9 646.4 597.9 645.5 594.0C644.6 590.1 643.8 585.8 643.0 582.0C642.2 578.2 641.6 574.8 641.0 571.0C640.4 567.2 639.8 561.4 639.6 559.5"/><path d="M637.0 556.2C647.5 556.0 672.8 555.4 700.0 555.2C727.2 555.0 766.7 555.1 800.0 555.0C833.3 554.9 869.0 554.8 900.0 554.6C931.0 554.4 968.5 554.4 986.0 554.0C1003.5 553.6 998.5 553.2 1005.0 552.5C1011.5 551.8 1017.5 550.7 1025.0 550.0C1032.5 549.3 1042.2 548.9 1050.0 548.5C1057.8 548.1 1062.0 547.8 1072.0 547.5C1082.0 547.2 1097.0 547.1 1110.0 547.0C1123.0 546.9 1141.3 546.8 1150.0 547.0C1158.7 547.2 1158.8 547.4 1162.0 548.0C1165.2 548.6 1167.1 549.1 1169.0 550.6C1170.9 552.1 1172.4 553.9 1173.5 557.0C1174.6 560.1 1175.2 565.2 1175.4 569.4C1175.7 573.6 1175.4 577.8 1175.0 582.0C1174.6 586.2 1173.8 591.2 1173.0 594.5C1172.2 597.8 1171.2 599.7 1170.0 602.0C1168.8 604.3 1167.5 606.9 1166.0 608.5C1164.5 610.1 1162.8 610.7 1161.0 611.5C1159.2 612.3 1156.4 613.0 1155.5 613.3"/><path d="M915.0 808.9C903.4 808.3 869.5 806.2 845.3 805.2C821.1 804.2 795.0 803.6 770.0 803.2C745.0 802.8 713.3 802.8 695.0 803.0C676.7 803.2 668.3 803.7 660.0 804.2C651.7 804.8 649.0 805.1 645.0 806.3C641.0 807.5 638.3 809.2 636.0 811.5C633.7 813.8 631.7 817.3 631.3 820.0C630.9 822.7 632.0 825.2 633.5 827.5C635.0 829.8 636.9 831.5 640.0 833.8C643.1 836.1 647.0 839.2 652.0 841.5C657.0 843.8 663.2 845.9 670.0 847.6C676.8 849.4 684.7 850.9 693.0 852.0C701.3 853.1 707.2 853.9 720.0 854.4C732.8 854.9 753.3 854.9 770.0 855.0C786.7 855.1 798.3 855.0 820.0 855.0C841.7 855.0 874.9 855.0 900.0 854.8C925.1 854.6 953.0 854.4 970.5 853.9C988.0 853.4 994.6 852.6 1005.0 852.0C1015.4 851.4 1025.2 850.9 1033.0 850.0C1040.8 849.1 1047.0 848.0 1052.0 846.8C1057.0 845.6 1060.3 844.7 1063.0 842.6C1065.7 840.5 1066.9 836.9 1068.0 834.0C1069.1 831.1 1069.6 827.7 1069.4 825.0C1069.2 822.3 1068.5 819.9 1067.0 818.0C1065.5 816.1 1064.9 814.9 1060.7 813.8C1056.5 812.7 1048.7 812.1 1042.0 811.6C1035.3 811.1 1032.6 810.9 1020.6 810.5C1008.6 810.1 986.7 809.8 970.0 809.5C953.3 809.2 935.5 809.0 920.5 808.8C905.5 808.5 892.4 808.2 880.0 808.0C867.6 807.8 851.7 807.7 846.0 807.6"/></g>
</svg>
</div>
</body>
</html>
